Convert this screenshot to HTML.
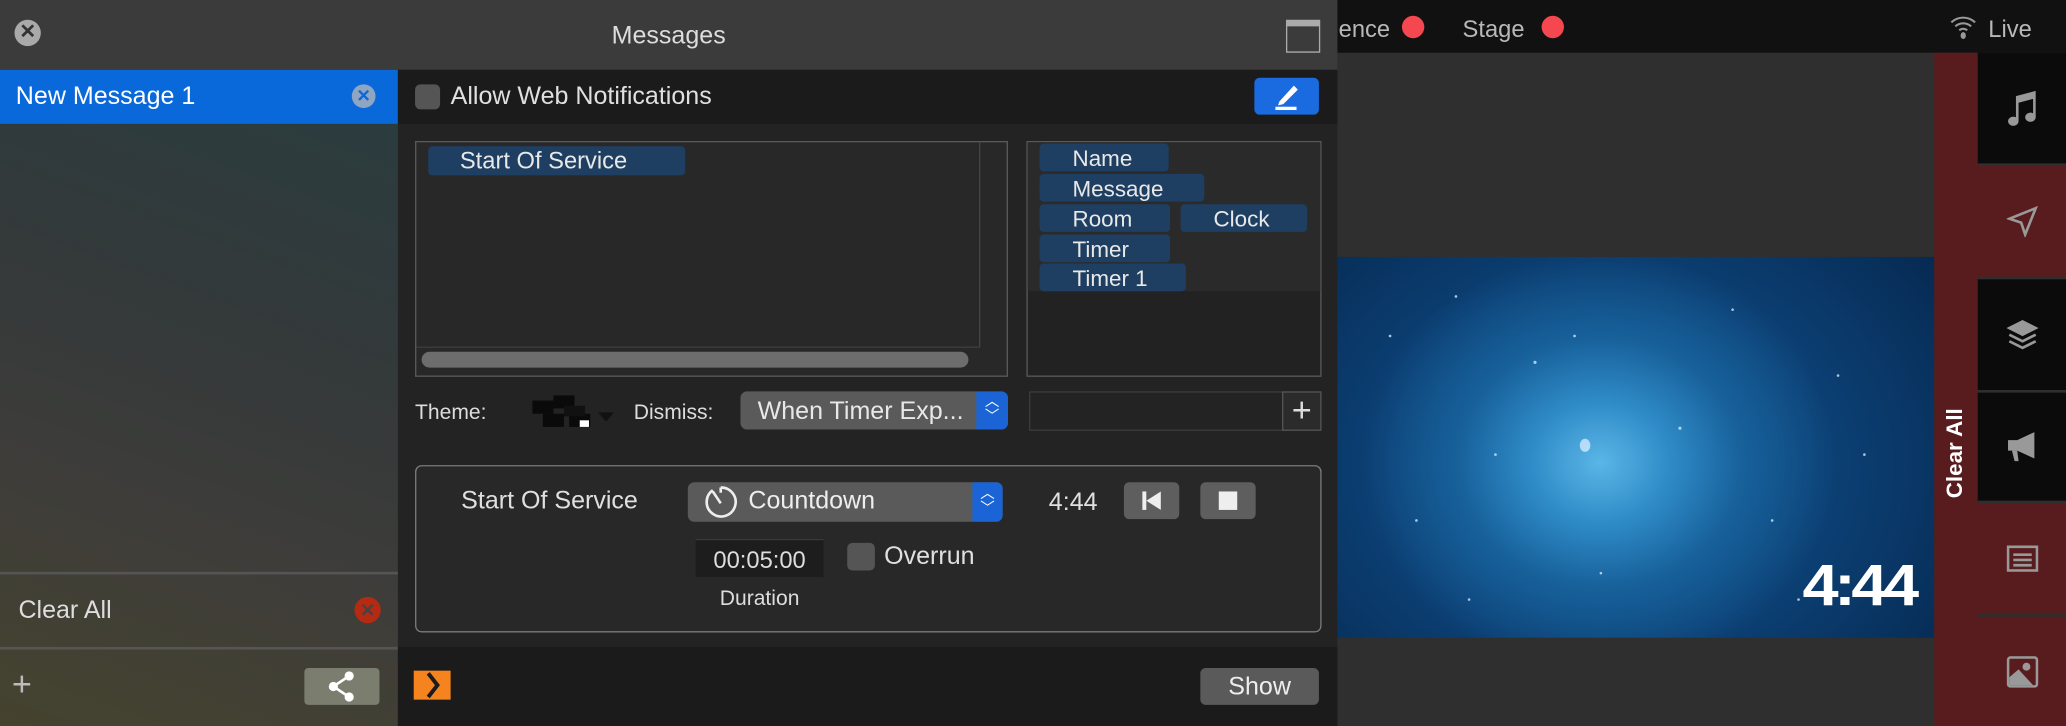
<!DOCTYPE html>
<html><head><meta charset="utf-8"><style>
html,body{margin:0;padding:0;width:2066px;height:726px;overflow:hidden;background:#2f2f2f}
#s{position:absolute;left:0;top:0;width:1568px;height:551px;transform:scale(1.31760,1.31760);transform-origin:0 0;font-family:"Liberation Sans",sans-serif;color:#e6e6e6}
.a{position:absolute}
.t{position:absolute;white-space:nowrap;font-size:18px;line-height:22px}
.tag{position:absolute;background:#1f3f62;border-radius:3px;color:#e8e8e8;font-size:17px;line-height:23px;padding-left:25px;box-sizing:border-box}
.seg{position:absolute;left:1501px;width:67px;display:flex;align-items:center;justify-content:center}
</style></head><body><div id="s">
<div class="a" style="left:1015px;top:0;width:553px;height:40px;background:#111"></div>
<div class="t" style="left:1016px;top:11px;color:#b8b8b8">ence</div>
<div class="a" style="left:1064px;top:12px;width:17px;height:17px;border-radius:50%;background:#f5474f"></div>
<div class="t" style="left:1110px;top:11px;color:#b8b8b8">Stage</div>
<div class="a" style="left:1170px;top:12px;width:17px;height:17px;border-radius:50%;background:#f5474f"></div>
<svg class="a" style="left:1479px;top:9px" width="22" height="22" viewBox="0 0 22 22" fill="none" stroke="#999" stroke-width="1.6"><path d="M2 8 A13 13 0 0 1 20 8"/><path d="M5 11 A9 9 0 0 1 17 11"/><path d="M8 14 A4.5 4.5 0 0 1 14 14"/><ellipse cx="11" cy="18" rx="2" ry="2.6" fill="#999" stroke="none"/></svg>
<div class="t" style="left:1509px;top:11px;color:#b8b8b8">Live</div>
<div class="a" style="left:1015px;top:195px;width:453px;height:289px;background:radial-gradient(ellipse 40% 55% at 44% 54%,#5ab6e6 0%,#2e8ac6 30%,#17609a 60%,rgba(10,58,106,0) 100%),radial-gradient(ellipse 70% 90% at 45% 55%,#11518a 0%,#0b3d70 60%,#062a52 100%)"></div>
<svg class="a" style="left:1015px;top:195px" width="453" height="289"><g fill="#cfe8ff" opacity=".8"><circle cx="40" cy="60" r="1"/><circle cx="90" cy="30" r="1"/><circle cx="150" cy="80" r="1.2"/><circle cx="300" cy="40" r="1"/><circle cx="380" cy="90" r="1"/><circle cx="60" cy="200" r="1"/><circle cx="120" cy="150" r="1"/><circle cx="260" cy="130" r="1.2"/><circle cx="330" cy="200" r="1"/><circle cx="200" cy="240" r="1"/><circle cx="400" cy="150" r="1"/><circle cx="180" cy="60" r="1"/><circle cx="350" cy="260" r="1"/><circle cx="100" cy="260" r="1"/><ellipse cx="188" cy="143" rx="4" ry="5"/></g></svg>
<div class="a" style="left:1368px;top:420px;font:bold 44px/50px 'Liberation Sans',sans-serif;color:#fff;letter-spacing:-3px;transform:scaleX(1.12);transform-origin:0 0">4:44</div>
<div class="a" style="left:1468px;top:40px;width:33px;height:511px;background:#581c1e"></div>
<div class="a" style="left:1468px;top:324px;width:33px;height:40px;display:flex;align-items:center;justify-content:center"><div style="transform:rotate(-90deg);white-space:nowrap;font:bold 17px 'Liberation Sans',sans-serif;color:#fff">Clear All</div></div>
<div class="seg" style="top:40px;height:84px;background:#0b0b0b"><svg width="26" height="30" viewBox="0 0 26 30" fill="#999"><path d="M8 6 L23 2 V22 H21 V8 L10 11 V25 H8 Z"/><ellipse cx="6" cy="25" rx="4" ry="3.5"/><ellipse cx="19" cy="22" rx="4" ry="3.5"/></svg></div>
<div class="seg" style="top:126px;height:84px;background:#581c1e"><svg width="24" height="24" viewBox="0 0 24 24"><path d="M22 2 L2 10 L11 13 L14 22 Z" fill="none" stroke="#999" stroke-width="2"/></svg></div>
<div class="seg" style="top:212px;height:84px;background:#0b0b0b"><svg width="24" height="26" viewBox="0 0 24 26" fill="none" stroke="#999" stroke-width="2"><path d="M2 8 L12 3 L22 8 L12 13 Z" fill="#999"/><path d="M2 13 L12 18 L22 13"/><path d="M2 18 L12 23 L22 18"/></svg></div>
<div class="seg" style="top:298px;height:82px;background:#0b0b0b"><svg width="26" height="26" viewBox="0 0 26 26" fill="#999"><path d="M2 8 H9 L22 2 V22 L9 16 H2 Z"/><path d="M5 16 H9 L10 24 H7 Z"/></svg></div>
<div class="seg" style="top:382px;height:84px;background:#581c1e"><svg width="24" height="20" viewBox="0 0 24 20" fill="none" stroke="#999" stroke-width="2"><rect x="1" y="1" width="22" height="18"/><path d="M5 7H19M5 11H19M5 15H19"/></svg></div>
<div class="seg" style="top:468px;height:83px;background:#581c1e"><svg width="24" height="24" viewBox="0 0 24 24"><rect x="1" y="1" width="22" height="22" rx="2" fill="none" stroke="#999" stroke-width="2"/><circle cx="15" cy="8" r="3" fill="#999"/><path d="M2 22 L2 16 L9 10 L20 22 Z" fill="#999"/></svg></div>

<div class="a" style="left:0;top:0;width:1015px;height:53px;background:#3b3b3b"></div>
<div class="a" style="left:11px;top:15px;width:20px;height:20px;border-radius:50%;background:#a9a9a9;color:#333;font:bold 15px/20px 'Liberation Sans';text-align:center">✕</div>
<div class="t" style="left:0;width:1015px;text-align:center;top:17px;font-size:19px;color:#ddd">Messages</div>
<div class="a" style="left:976px;top:15px;width:24px;height:19px;border:1.5px solid #aaa;border-top:5px solid #aaa"></div>

<div class="a" style="left:0;top:94px;width:302px;height:457px;background:linear-gradient(200deg,#2b3c3e 0%,#34393a 35%,#3e3d3a 65%,#45432e 100%)"></div>
<div class="a" style="left:0;top:53px;width:302px;height:41px;background:#0a69da"></div>
<div class="t" style="left:12px;top:63px;color:#fff;font-size:19px">New Message 1</div>
<div class="a" style="left:267px;top:64px;width:18px;height:18px;border-radius:50%;background:#8fa5c2;color:#0a69da;font:bold 13px/18px 'Liberation Sans';text-align:center">✕</div>
<div class="a" style="left:0;top:434px;width:302px;height:2px;background:#555"></div>
<div class="t" style="left:14px;top:453px;font-size:19px;color:#ddd">Clear All</div>
<div class="a" style="left:269px;top:453px;width:20px;height:20px;border-radius:50%;background:#b52a12;color:#444;font:bold 14px/20px 'Liberation Sans';text-align:center">✕</div>
<div class="a" style="left:0;top:491px;width:302px;height:2px;background:#555"></div>
<div class="t" style="left:9px;top:508px;font-size:26px;color:#bbb;font-weight:300">+</div>
<div class="a" style="left:231px;top:507px;width:57px;height:28px;background:#7b7d6e;border-radius:3px"></div>
<svg class="a" style="left:246px;top:509px" width="26" height="24" viewBox="0 0 26 24"><path d="M19 4 L7 12 L19 20" stroke="#fff" stroke-width="2" fill="none"/><circle cx="19" cy="4" r="3.5" fill="#fff"/><circle cx="7" cy="12" r="3.5" fill="#fff"/><circle cx="19" cy="20" r="3.5" fill="#fff"/></svg>

<div class="a" style="left:302px;top:53px;width:713px;height:498px;background:#232323"></div>
<div class="a" style="left:302px;top:53px;width:713px;height:41px;background:#1b1b1b"></div>
<div class="a" style="left:315px;top:64px;width:19px;height:19px;border-radius:4px;background:#555"></div>
<div class="t" style="left:342px;top:63px;font-size:19px;color:#e0e0e0">Allow Web Notifications</div>
<div class="a" style="left:952px;top:59px;width:49px;height:28px;border-radius:4px;background:#1a6be0"></div>
<svg class="a" style="left:964px;top:61px" width="26" height="24" viewBox="0 0 26 24"><path d="M7 16 L18 4 L21 7 L10 18 L6 19 Z" fill="#fff"/><rect x="4" y="20" width="16" height="2.5" fill="#fff"/></svg>

<div class="a" style="left:315px;top:107px;width:448px;height:177px;border:1px solid #5a5a5a;background:#282828"></div>
<div class="a" style="left:743px;top:108px;width:1px;height:155px;background:#444"></div>
<div class="a" style="left:316px;top:263px;width:428px;height:1px;background:#3e3e3e"></div>
<div class="a" style="left:320px;top:267px;width:415px;height:12px;border-radius:6px;background:#6d6d6d"></div>
<div class="tag" style="left:325px;top:111px;width:195px;height:22px;padding-left:24px;font-size:18px">Start Of Service</div>

<div class="a" style="left:779px;top:107px;width:222px;height:177px;border:1px solid #5a5a5a;background:#222"></div>
<div class="a" style="left:780px;top:108px;width:222px;height:113px;background:#2a2a2a"></div>
<div class="tag" style="left:789px;top:109px;width:98px;height:21px">Name</div>
<div class="tag" style="left:789px;top:132px;width:125px;height:21px">Message</div>
<div class="tag" style="left:789px;top:155px;width:99px;height:21px">Room</div>
<div class="tag" style="left:896px;top:155px;width:96px;height:21px">Clock</div>
<div class="tag" style="left:789px;top:178px;width:99px;height:21px">Timer</div>
<div class="tag" style="left:789px;top:200px;width:111px;height:21px">Timer 1</div>

<div class="t" style="left:315px;top:303px;font-size:16px;color:#ddd">Theme:</div>
<svg class="a" style="left:404px;top:300px" width="64" height="28" viewBox="0 0 64 28"><rect x="0" y="4" width="16" height="10" fill="#0a0a0a"/><rect x="16" y="0" width="16" height="10" fill="#0a0a0a"/><rect x="8" y="14" width="16" height="10" fill="#0a0a0a"/><rect x="28" y="14" width="16" height="10" fill="#0a0a0a"/><rect x="24" y="8" width="16" height="8" fill="#111"/><rect x="36" y="19" width="7" height="5" fill="#fff"/><path d="M50 13 L62 13 L56 20 Z" fill="#111"/></svg>
<div class="t" style="left:481px;top:303px;font-size:16px;color:#ddd">Dismiss:</div>
<div class="a" style="left:562px;top:297px;width:203px;height:29px;border-radius:5px;background:#5a5a5a;overflow:hidden"><div style="position:absolute;right:0;top:0;width:24px;height:29px;background:#1a64d6;color:#fff;font-size:11px;line-height:11px;text-align:center;padding-top:3px;box-sizing:border-box">︿<br>﹀</div></div>
<div class="t" style="left:575px;top:302px;font-size:19px;color:#e8e8e8">When Timer Exp...</div>
<div class="a" style="left:781px;top:297px;width:191px;height:28px;background:#232323;border:1px solid #3c3c3c"></div>
<div class="a" style="left:973px;top:297px;width:28px;height:28px;background:#2b2b2b;border:1px solid #555;color:#ddd;font-size:26px;line-height:26px;text-align:center">+</div>

<div class="a" style="left:315px;top:353px;width:686px;height:125px;border:1.5px solid #7a7a7a;border-radius:5px;background:#282828"></div>
<div class="t" style="left:350px;top:370px;font-size:19px;color:#e0e0e0">Start Of Service</div>
<div class="a" style="left:522px;top:366px;width:239px;height:30px;border-radius:5px;background:#5a5a5a;overflow:hidden"><div style="position:absolute;right:0;top:0;width:23px;height:30px;background:#1a64d6;color:#fff;font-size:11px;line-height:11px;text-align:center;padding-top:4px;box-sizing:border-box">︿<br>﹀</div></div>
<svg class="a" style="left:533px;top:367px" width="28" height="28" viewBox="0 0 28 28" fill="none" stroke="#eee" stroke-width="2"><path d="M8 5 A11 11 0 1 0 14 3"/><path d="M14 3 V7"/><path d="M8 6 L14 15"/></svg>
<div class="t" style="left:568px;top:370px;font-size:19px;color:#eee">Countdown</div>
<div class="t" style="left:796px;top:371px;font-size:19px;color:#e0e0e0">4:44</div>
<div class="a" style="left:853px;top:366px;width:42px;height:28px;border-radius:4px;background:#5e5e5e"></div>
<svg class="a" style="left:865px;top:372px" width="18" height="16" viewBox="0 0 18 16" fill="#eee"><rect x="2" y="1" width="3" height="14"/><path d="M16 1 V15 L5 8 Z"/></svg>
<div class="a" style="left:911px;top:366px;width:42px;height:28px;border-radius:4px;background:#5e5e5e"></div>
<div class="a" style="left:925px;top:373px;width:14px;height:14px;background:#eee"></div>
<div class="a" style="left:528px;top:409px;width:97px;height:28px;background:#1d1d1d;border-top:1px solid #3a3a3a"></div>
<div class="t" style="left:528px;width:97px;text-align:center;top:414px;font-size:18px;color:#ddd">00:05:00</div>
<div class="t" style="left:528px;width:97px;text-align:center;top:444px;font-size:16px;color:#ddd">Duration</div>
<div class="a" style="left:643px;top:412px;width:21px;height:21px;border-radius:4px;background:#555"></div>
<div class="t" style="left:671px;top:412px;font-size:19px;color:#e0e0e0">Overrun</div>

<div class="a" style="left:302px;top:491px;width:713px;height:60px;background:#1b1b1b"></div>
<div class="a" style="left:314px;top:509px;width:28px;height:22px;background:#f5841f"></div>
<svg class="a" style="left:314px;top:509px" width="28" height="22" viewBox="0 0 28 22"><path d="M11 2 L18 11 L11 20" stroke="#1b1b1b" stroke-width="3" fill="none"/></svg>
<div class="a" style="left:911px;top:507px;width:90px;height:28px;border-radius:4px;background:#5a5a5a;color:#eee;font-size:19px;line-height:29px;text-align:center">Show</div>
</div></body></html>
